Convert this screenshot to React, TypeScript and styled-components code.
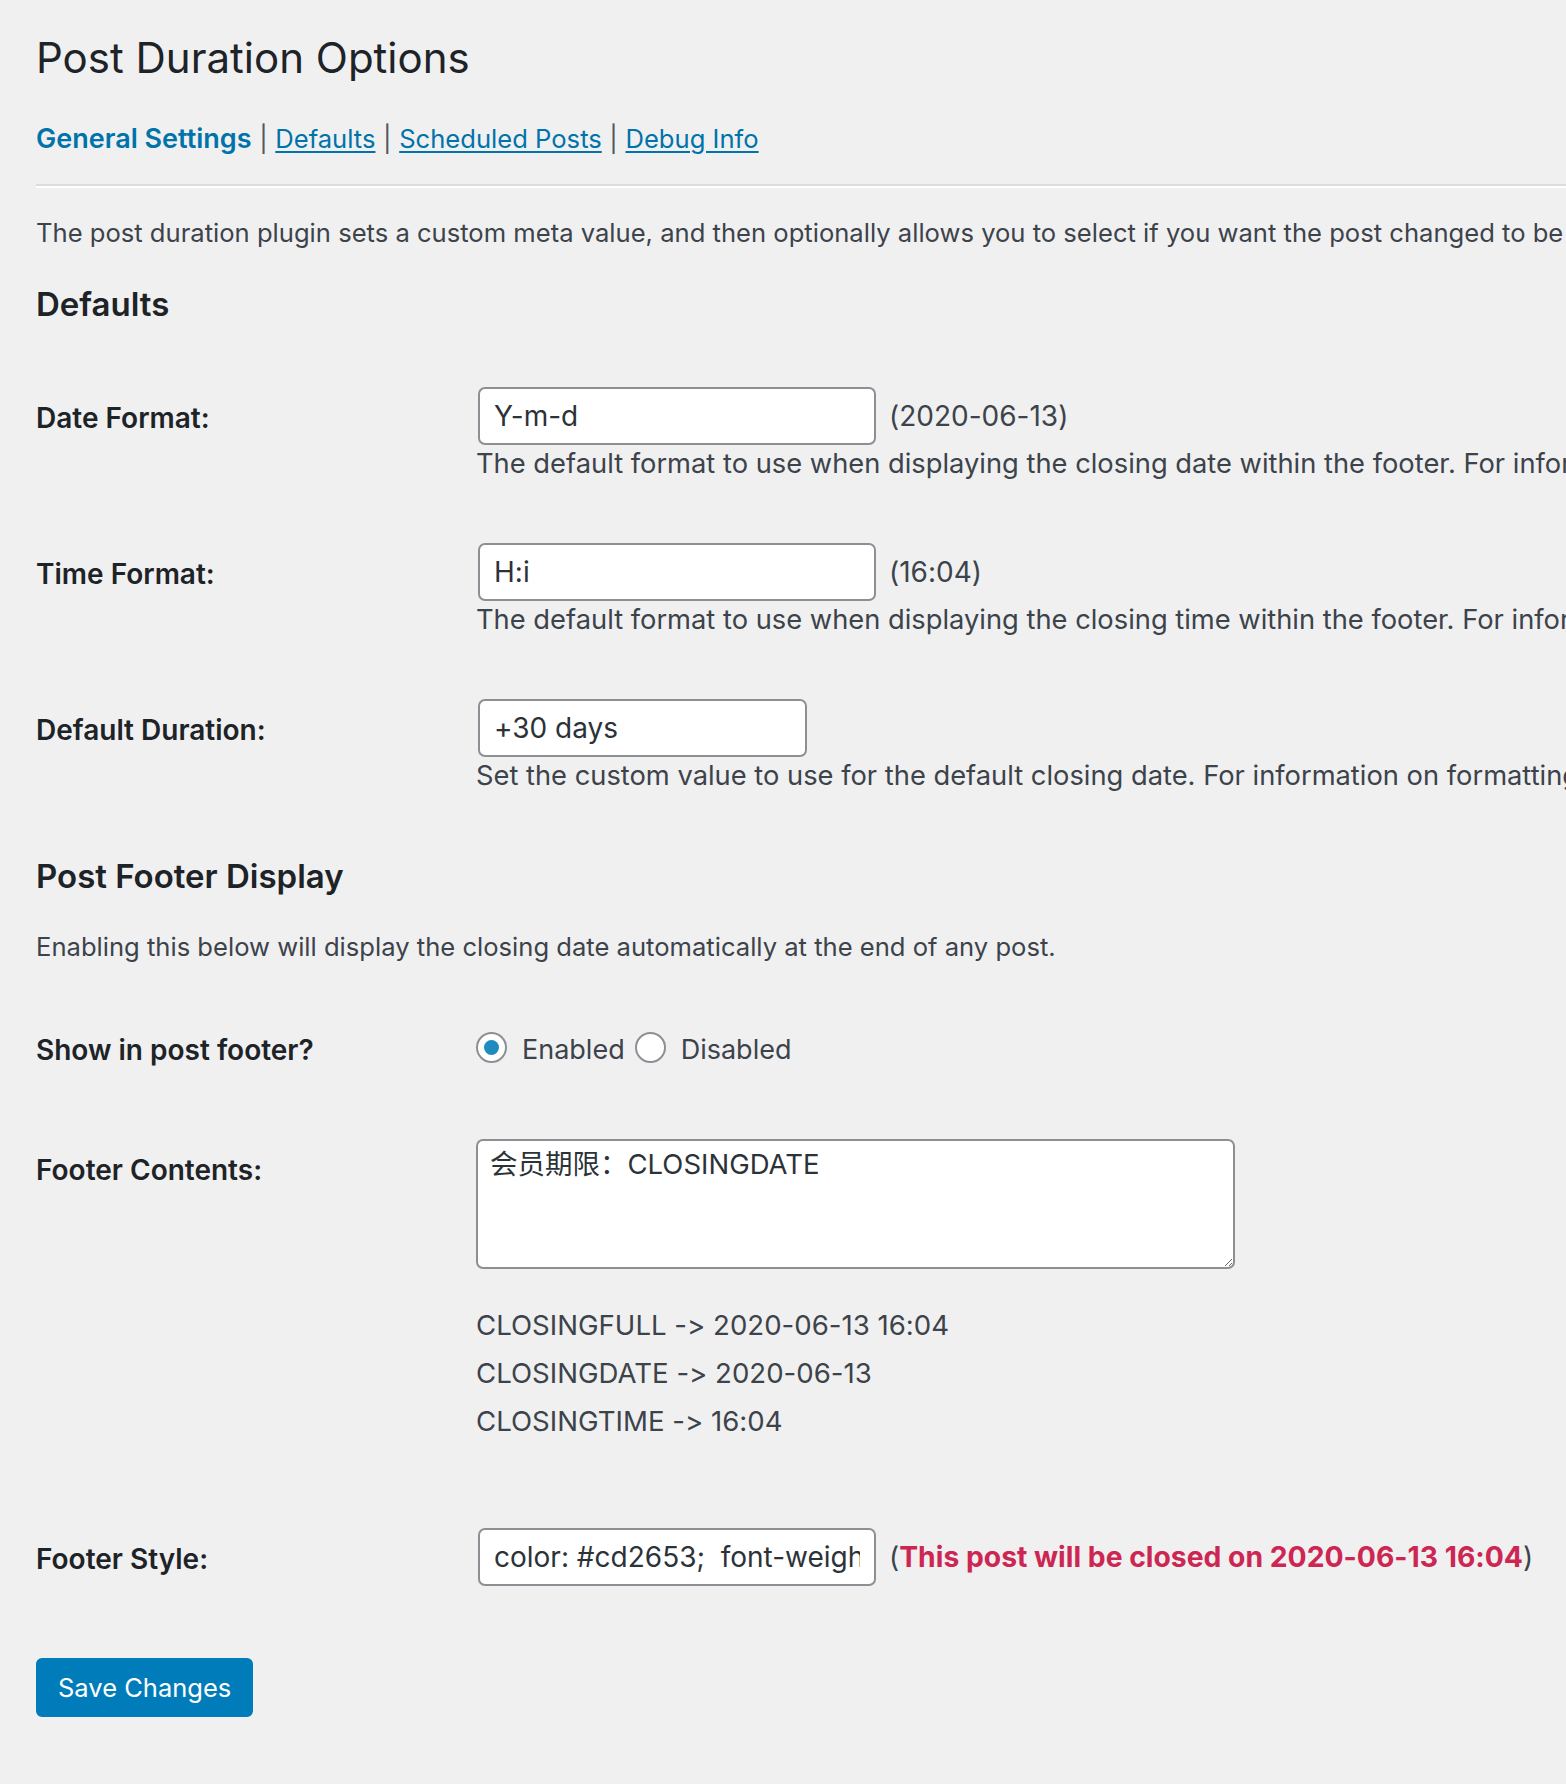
import React from "react";
import styled, { createGlobalStyle } from "styled-components";

const GlobalStyle = createGlobalStyle`
  html, body {
    margin: 0;
    padding: 0;
    background: #f0f0f1;
    overflow: hidden;
  }
  body {
    font-family: Inter, "Noto Sans CJK SC", sans-serif;
    font-feature-settings: "calt" 0;
    color: #3c434a;
  }
  input, textarea, button {
    font-feature-settings: "calt" 0;
  }
`;

const Wrap = styled.div`
  width: 2300px;
  min-height: 1784px;
  padding-left: 36px;
  box-sizing: border-box;
`;

const Title = styled.h1`
  margin: 29px 0 0;
  font-size: 42px;
  font-weight: 400;
  line-height: 58px;
  color: #1d2327;
`;

const Nav = styled.div`
  margin-top: 35px;
  font-size: 25.6px;
  line-height: 34px;
  color: #50575e;
`;

const NavLink = styled.a<{ $current?: boolean }>`
  color: #0073aa;
  font-size: ${(p) => (p.$current ? 27 : 25.6)}px;
  font-weight: ${(p) => (p.$current ? 600 : 400)};
  text-decoration: ${(p) => (p.$current ? "none" : "underline")};
  text-underline-offset: 3px;
  cursor: pointer;
`;

const Sep = styled.span`
  margin: 0 7.6px;
`;

const Rule = styled.hr`
  margin: 28px 0 0;
  height: 0;
  border: 0;
  border-top: 2px solid #dcdcde;
  border-bottom: 2px solid #fff;
`;

const Text = styled.p<{ $mt: number }>`
  margin: ${(p) => p.$mt}px 0 0;
  font-size: 25.6px;
  line-height: 34px;
  white-space: nowrap;
`;

const SectionTitle = styled.h2<{ $mt: number }>`
  margin: ${(p) => p.$mt}px 0 0;
  font-size: 33px;
  font-weight: 600;
  line-height: 40px;
  color: #1d2327;
`;

const FormTable = styled.div<{ $mt: number }>`
  margin-top: ${(p) => p.$mt}px;
`;

const Row = styled.div`
  display: grid;
  grid-template-columns: 440px 1fr;
  padding: 29px 0 33px;
`;

const Label = styled.div<{ $offset?: number }>`
  padding-top: ${(p) => p.$offset ?? 14}px;
  font-size: 28px;
  font-weight: 600;
  line-height: 34px;
  color: #1d2327;
`;

const Field = styled.div`
  display: flex;
  flex-direction: column;
  align-items: flex-start;
  font-size: 28px;
`;

const InputLine = styled.div`
  display: flex;
  align-items: center;
`;

const TextInput = styled.input<{ $w: number }>`
  width: ${(p) => p.$w}px;
  height: 58px;
  margin: 0 0 0 2px;
  padding: 0 14px;
  box-sizing: border-box;
  border: 2px solid #8c8f94;
  border-radius: 7px;
  background: #fff;
  font-family: inherit;
  font-size: 28px;
  color: #2c3338;
  outline: none;
`;

const Hint = styled.span`
  margin-left: 13px;
  line-height: 34px;
  white-space: nowrap;
`;

const Preview = styled.strong`
  color: #cd2653;
  font-weight: 700;
  font-size: 28.3px;
`;

const Description = styled.p`
  margin: 2px 0 0;
  font-size: 27.3px;
  line-height: 34px;
  white-space: nowrap;
`;

const RadioGroup = styled.div`
  display: flex;
  align-items: center;
  height: 54px;
`;

const RadioLabel = styled.label`
  display: flex;
  align-items: center;
  font-size: 27px;
  line-height: 34px;
  margin-right: 10px;
  cursor: pointer;
`;

const Radio = styled.input`
  appearance: none;
  width: 31px;
  height: 31px;
  margin: -6px 15px 0 0;
  border: 2px solid #8c8f94;
  border-radius: 50%;
  background: #fff;
  box-sizing: border-box;
  display: grid;
  place-items: center;

  &:checked::before {
    content: "";
    width: 15px;
    height: 15px;
    border-radius: 50%;
    background: #1e8cbe;
  }
`;

const TextArea = styled.textarea`
  width: 759px;
  height: 130px;
  margin: 0;
  padding: 4px 12px;
  box-sizing: border-box;
  border: 2px solid #8c8f94;
  border-radius: 7px;
  background: #fff;
  font-family: Inter, "Noto Sans CJK SC", sans-serif;
  font-size: 27.5px;
  line-height: 38px;
  color: #2c3338;
  outline: none;
`;

const Tokens = styled.div`
  margin: 32px 0 21px;
  font-size: 27.6px;
  line-height: 48px;
  color: #3c434a;
`;

const SaveButton = styled.button`
  margin-top: 39px;
  height: 59px;
  padding: 0 20px;
  border: 2px solid #007cba;
  border-radius: 6px;
  background: #007cba;
  color: #fff;
  font-family: inherit;
  font-size: 25.5px;
  cursor: pointer;
`;

const fields = [
  {
    label: "Date Format:",
    value: "Y-m-d",
    width: 398,
    hint: "(2020-06-13)",
    desc: "The default format to use when displaying the closing date within the footer. For information on formatting, see the PHP date documentation.",
  },
  {
    label: "Time Format:",
    value: "H:i",
    width: 398,
    hint: "(16:04)",
    desc: "The default format to use when displaying the closing time within the footer. For information on formatting, see the PHP date documentation.",
  },
  {
    label: "Default Duration:",
    value: "+30 days",
    width: 329,
    hint: "",
    desc: "Set the custom value to use for the default closing date. For information on formatting, see the PHP strtotime documentation.",
  },
];

export default function App() {
  return (
    <>
      <GlobalStyle />
      <Wrap>
        <Title>Post Duration Options</Title>
        <Nav>
          <NavLink $current>General Settings</NavLink>
          <Sep>|</Sep>
          <NavLink>Defaults</NavLink>
          <Sep>|</Sep>
          <NavLink>Scheduled Posts</NavLink>
          <Sep>|</Sep>
          <NavLink>Debug Info</NavLink>
        </Nav>
        <Rule />
        <Text $mt={28}>
          The post duration plugin sets a custom meta value, and then optionally allows you to select if you want the post changed to be a draft or trash once it expires.
        </Text>
        <SectionTitle $mt={34}>Defaults</SectionTitle>
        <FormTable $mt={34}>
          {fields.map((f) => (
            <Row key={f.label}>
              <Label>{f.label}</Label>
              <Field>
                <InputLine>
                  <TextInput $w={f.width} defaultValue={f.value} />
                  {f.hint && <Hint>{f.hint}</Hint>}
                </InputLine>
                <Description>{f.desc}</Description>
              </Field>
            </Row>
          ))}
        </FormTable>

        <SectionTitle $mt={30}>Post Footer Display</SectionTitle>
        <Text $mt={34}>
          Enabling this below will display the closing date automatically at the end of any post.
        </Text>
        <FormTable $mt={30}>
          <Row>
            <Label $offset={10}>Show in post footer?</Label>
            <Field>
              <RadioGroup>
                <RadioLabel>
                  <Radio type="radio" name="footer" defaultChecked />
                  Enabled
                </RadioLabel>
                <RadioLabel>
                  <Radio type="radio" name="footer" />
                  Disabled
                </RadioLabel>
              </RadioGroup>
            </Field>
          </Row>
          <Row>
            <Label>Footer Contents:</Label>
            <Field>
              <TextArea defaultValue="会员期限：CLOSINGDATE" />
              <Tokens>
                <div>CLOSINGFULL -&gt; 2020-06-13 16:04</div>
                <div>CLOSINGDATE -&gt; 2020-06-13</div>
                <div>CLOSINGTIME -&gt; 16:04</div>
              </Tokens>
            </Field>
          </Row>
          <Row>
            <Label>Footer Style:</Label>
            <Field>
              <InputLine>
                <TextInput $w={398} defaultValue="color: #cd2653;  font-weight: bold;" />
                <Hint>
                  (<Preview>This post will be closed on 2020-06-13 16:04</Preview>)
                </Hint>
              </InputLine>
            </Field>
          </Row>
        </FormTable>
        <SaveButton>Save Changes</SaveButton>
      </Wrap>
    </>
  );
}
